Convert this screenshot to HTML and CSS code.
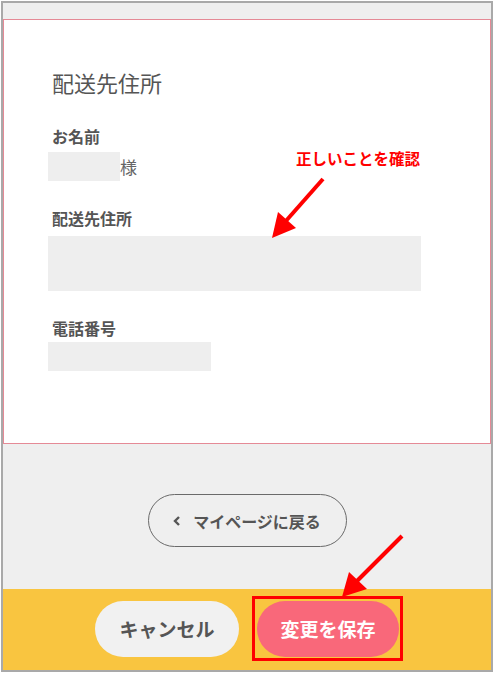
FILE: index.html
```html
<!DOCTYPE html>
<html lang="ja">
<head>
  <meta charset="UTF-8">
  <meta name="viewport" content="width=device-width, initial-scale=1.0">
  <title>配送先住所</title>
  <link rel="stylesheet" href="styles.css">
</head>
<body>

  <div class="frame">
    <div class="card">
      <h1 class="card-title">配送先住所</h1>

      <div class="field">
        <div class="label">お名前</div>
        <div class="name-row">
          <span class="blank blank-name"></span><span class="suffix">様</span>
        </div>
      </div>

      <div class="field">
        <div class="label">配送先住所</div>
        <div class="blank blank-address"></div>
      </div>

      <div class="field">
        <div class="label">電話番号</div>
        <div class="blank blank-phone"></div>
      </div>
    </div>

    <div class="back-area">
      <button class="back-btn">
        <svg class="chevron" width="8" height="10" viewBox="0 0 8 10">
          <path d="M6 1 L2 5 L6 9" fill="none" stroke="#555" stroke-width="2.4"/>
        </svg>
        マイページに戻る
      </button>
    </div>

    <div class="footer">
      <button class="btn btn-cancel">キャンセル</button>
      <div class="save-wrap">
        <button class="btn btn-save">変更を保存</button>
        <span class="highlight"></span>
      </div>
    </div>

    <!-- annotations -->
    <div class="note">正しいことを確認</div>
    <svg class="arrows" width="494" height="673" viewBox="0 0 494 673">
      <line x1="323" y1="179" x2="285" y2="222" stroke="#ff0000" stroke-width="4"/>
      <polygon points="272,238 278,212 296,228" fill="#ff0000"/>
      <line x1="402" y1="536" x2="356" y2="582" stroke="#ff0000" stroke-width="4"/>
      <polygon points="342,597 349,572 367,589" fill="#ff0000"/>
    </svg>
  </div>

</body>
</html>
```

FILE: styles.css
```css
* {
  box-sizing: border-box;
  margin: 0;
  padding: 0;
}

body {
  font-family: "Noto Sans CJK JP", "Noto Sans", sans-serif;
  color: #555;
  background-color: #fff;
  padding: 1px;
}

.frame {
  position: relative;
  height: 671px;
  border: 2px solid #a9a9a9;
  background-color: #efefef;
  display: flex;
  flex-direction: column;
}

.card {
  margin-top: 16px;
  height: 425px;
  background-color: #fff;
  border: 1px solid #e58a96;
  padding: 46px 44px 0;
}

.card-title {
  font-size: 22px;
  font-weight: normal;
  line-height: 32px;
  margin-bottom: 26px;
  padding-left: 4px;
}

.field {
  margin-bottom: 25px;
}

.label {
  font-size: 16px;
  font-weight: bold;
  line-height: 24px;
  padding-left: 4px;
}

.name-row {
  display: flex;
  align-items: center;
  margin-top: 4px;
}

.blank {
  display: block;
  background-color: #eeeeee;
}

.blank-name {
  width: 72px;
  height: 29px;
}

.suffix {
  font-size: 17px;
  color: #666;
  line-height: 29px;
}

.blank-address {
  width: 373px;
  height: 55px;
  margin-top: 6px;
}

.blank-phone {
  width: 163px;
  height: 29px;
  margin-top: 2px;
}

.back-area {
  flex: 1;
  display: flex;
  justify-content: center;
  padding-top: 50px;
}

.back-btn {
  width: 199px;
  height: 53px;
  border: 1px solid #6a6a6a;
  border-radius: 27px;
  background: transparent;
  font-family: inherit;
  font-size: 16px;
  font-weight: bold;
  color: #555;
  display: flex;
  align-items: center;
  justify-content: center;
  gap: 12px;
}

.footer {
  height: 81px;
  background-color: #f9c540;
  display: flex;
  justify-content: center;
  align-items: center;
  gap: 18px;
  padding-bottom: 2px;
}

.btn {
  height: 56px;
  border: none;
  border-radius: 28px;
  font-family: inherit;
  font-size: 19px;
  font-weight: bold;
}

.btn-cancel {
  width: 144px;
  background-color: #f1f1f1;
  color: #555;
}

.save-wrap {
  position: relative;
}

.btn-save {
  width: 142px;
  background-color: #f9687a;
  color: #fff;
}

.highlight {
  position: absolute;
  left: -5px;
  top: -5px;
  right: -4px;
  bottom: -4px;
  border: 3px solid #ff0000;
}

.note {
  position: absolute;
  left: 293px;
  top: 145px;
  font-size: 15.5px;
  font-weight: bold;
  color: #ff0000;
  line-height: 20px;
}

.arrows {
  position: absolute;
  left: -3px;
  top: -3px;
  pointer-events: none;
}
```
